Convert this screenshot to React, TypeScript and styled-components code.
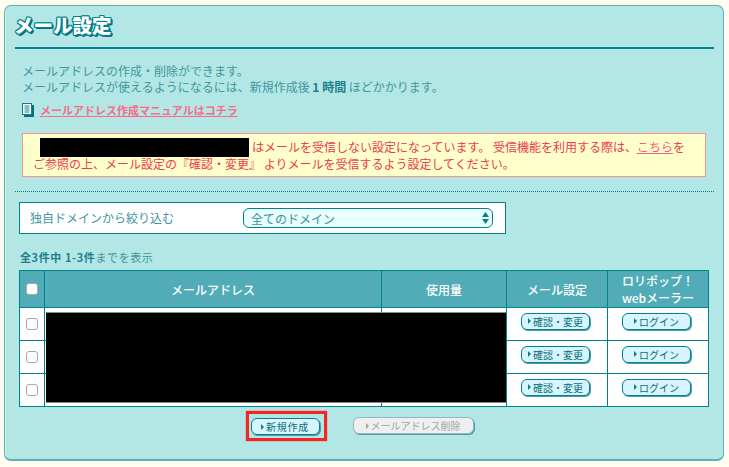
import React from "react";
import styled, { createGlobalStyle } from "styled-components";

const teal = "#00838f";
const FONT = `"Noto Sans CJK JP", "Liberation Sans", sans-serif`;

const GlobalStyle = createGlobalStyle`
  html, body {
    margin: 0;
    background: #fffdf0;
  }
  body {
    font-family: ${FONT};
    font-size: 12px;
    line-height: 16px;
    color: #44959f;
  }
`;

const Panel = styled.div`
  box-sizing: border-box;
  width: 720px;
  height: 456px;
  margin: 5px 0 0 4px;
  padding: 9px 9px 0 10px;
  background: #b2e7e5;
  border: 1px solid #55b1b4;
  border-bottom: 2px solid #58b0b0;
  border-radius: 7px;
  box-shadow: inset 1px 0 0 #d6f3f1;
`;

const Title = styled.h1`
  box-sizing: border-box;
  margin: 0;
  height: 34px;
  text-indent: -1px;
  border-bottom: 2px solid ${teal};
  font-size: 19.5px;
  line-height: 20px;
  font-weight: 900;
  color: #fff;
  text-shadow: -1px -1px 0 ${teal}, 1px -1px 0 ${teal}, -1px 1px 0 ${teal},
    1px 1px 0 ${teal}, 0 -1px 0 ${teal}, 0 1px 0 ${teal}, -1px 0 0 ${teal},
    1px 0 0 ${teal}, 2px 2px 0 #0b6f79, 2px 1px 0 #0b6f79, 1px 2px 0 #0b6f79;
`;

const Intro = styled.p`
  margin: 14px 0 0 7px;
`;

const Strong = styled.b`
  color: #1d7f8b;
`;

const ManualRow = styled.div`
  display: flex;
  align-items: center;
  gap: 6px;
  margin: 7px 0 0 7px;
  height: 16px;
`;

const ManualLink = styled.a`
  font-size: 11px;
  font-weight: 700;
  color: #fb6a87;
  text-decoration: underline;
`;

const Notice = styled.div`
  box-sizing: border-box;
  width: 684px;
  height: 44px;
  margin: 15px 0 0 7px;
  padding: 4px 10px 0;
  background: #ffffcc;
  border: 1px solid #ff9090;
  color: #ee3a4e;
  line-height: 17px;
`;

const NoticeLine = styled.div`
  height: 17px;
  white-space: nowrap;
`;

const NoticeLink = styled.a`
  color: #fb5a7a;
  text-decoration: underline;
`;

const InlineMask = styled.span`
  display: inline-block;
  width: 209px;
  height: 17px;
  margin: 0 3px 0 7px;
  vertical-align: -3px;
  background: #000;
  box-shadow: 0 1px 0 #000, 0 2px 0 #000;
`;

const Dotted = styled.div`
  margin-top: 14px;
  border-top: 1px dotted ${teal};
`;

const FilterBox = styled.div`
  box-sizing: border-box;
  display: flex;
  align-items: center;
  width: 487px;
  height: 32px;
  margin: 10px 0 0 4px;
  padding: 0 12px 0 10px;
  background: #fff;
  border: 1px solid ${teal};
`;

const FilterLabel = styled.span`
  width: 213px;
`;

const SelectWrap = styled.div`
  position: relative;
  flex: 1;
`;

const Select = styled.select`
  box-sizing: border-box;
  display: block;
  width: 100%;
  height: 20px;
  padding: 0 0 0 7px;
  appearance: none;
  background: #e9fffe;
  border: 1px solid ${teal};
  border-radius: 6px;
  font-family: ${FONT};
  font-size: 12px;
  color: #35939c;
  outline: none;
`;

const SelectArrows = styled.svg`
  position: absolute;
  top: 4px;
  right: 4px;
  pointer-events: none;
`;

const Count = styled.p`
  margin: 15px 0 0 5px;
  font-size: 11px;
  line-height: 16px;
  letter-spacing: 0.6px;
`;

const TableWrap = styled.div`
  position: relative;
  width: 690px;
  margin: 5px 0 0 4px;
`;

const Table = styled.table`
  width: 690px;
  border-collapse: collapse;
  table-layout: fixed;
  background: #fff;
  border: 1px solid ${teal};
`;

const Th = styled.th<{ $w?: number }>`
  width: ${(p) => (p.$w ? `${p.$w}px` : "auto")};
  height: 36px;
  padding: 0;
  background: #52acb8;
  border: 1px solid ${teal};
  font-size: 12px;
  line-height: 17px;
  font-weight: 500;
  color: #fff;
`;

const Td = styled.td`
  height: 32px;
  padding: 0;
  text-align: center;
  border: 1px solid ${teal};
`;

const CheckBox = styled.input.attrs({ type: "checkbox" })`
  display: block;
  box-sizing: border-box;
  width: 12px;
  height: 12px;
  margin: 0 auto;
  appearance: none;
  background: #fff;
  border: 1px solid #a8a8a8;
  border-radius: 3px;
`;

const Redaction = styled.div`
  position: absolute;
  left: 27px;
  top: 42px;
  width: 460px;
  height: 91px;
  background: #000;
  border-top: 1px solid #8a8a8a;
  border-bottom: 1px solid #8a8a8a;
  box-sizing: border-box;
`;

const Button = styled.button<{ $w: number; $off?: boolean; $spacing: number }>`
  display: inline-flex;
  align-items: center;
  justify-content: center;
  gap: 2px;
  box-sizing: border-box;
  width: ${(p) => p.$w}px;
  height: 17px;
  padding: 0;
  vertical-align: middle;
  background: ${(p) => (p.$off ? "#efefef" : "#d8f5ff")};
  border: 1px solid ${(p) => (p.$off ? "#8fb9bd" : teal)};
  border-radius: 6px;
  box-shadow: 1px 1px 0 #4e9aa3;
  font-family: ${FONT};
  font-size: 10px;
  line-height: 15px;
  letter-spacing: ${(p) => p.$spacing}px;
  color: ${(p) => (p.$off ? "#a3a3a3" : "#0b6f79")};
`;

const Caret = styled.span<{ $off?: boolean }>`
  width: 0;
  height: 0;
  border-left: 3px solid ${(p) => (p.$off ? "#a3a3a3" : teal)};
  border-top: 3px solid transparent;
  border-bottom: 3px solid transparent;
`;

const CellAction = styled.div`
  margin-bottom: 7px;
  padding-right: 3px;
`;

const Actions = styled.div`
  display: flex;
  justify-content: center;
  gap: 33px;
  width: 690px;
  margin: 10px 0 0 4px;
  padding-right: 4px;
  box-sizing: border-box;
`;

const Highlight = styled.div`
  position: relative;
  height: 17px;

  &::after {
    content: "";
    position: absolute;
    inset: -6px -7px -7px -5px;
    border: 3px solid #f5261f;
    box-shadow: 0 0 1px #f5261f;
    pointer-events: none;
  }
`;

const rows = [1, 2, 3];

const DocIcon = () => (
  <svg width="12" height="14" viewBox="0 0 12 14">
    <rect x="2" y="2" width="10" height="12" fill="#0b6f79" />
    <rect x="0.5" y="0.5" width="9" height="11" fill="#fff" stroke="#0b7f8b" />
    <path d="M2.5 3h5M2.5 5h5M2.5 7h5M2.5 9h5" stroke="#0b7f8b" />
  </svg>
);

const ActionButton = ({
  w,
  off,
  label,
  spacing = 0,
}: {
  w: number;
  off?: boolean;
  label: string;
  spacing?: number;
}) => (
  <Button $w={w} $off={off} $spacing={spacing} disabled={off}>
    <Caret $off={off} />
    {label}
  </Button>
);

const App = () => {
  return (
    <>
      <GlobalStyle />
      <Panel>
        <Title>メール設定</Title>
        <Intro>
          メールアドレスの作成・削除ができます。
          <br />
          メールアドレスが使えるようになるには、新規作成後 <Strong>1 時間</Strong> ほどかかります。
        </Intro>
        <ManualRow>
          <DocIcon />
          <ManualLink>メールアドレス作成マニュアルはコチラ</ManualLink>
        </ManualRow>
        <Notice>
          <NoticeLine>
            <InlineMask />
            はメールを受信しない設定になっています。 受信機能を利用する際は、
            <NoticeLink>こちら</NoticeLink>を
          </NoticeLine>
          <NoticeLine>
            ご参照の上、メール設定の『確認・変更』 よりメールを受信するよう設定してください。
          </NoticeLine>
        </Notice>
        <Dotted />
        <FilterBox>
          <FilterLabel>独自ドメインから絞り込む</FilterLabel>
          <SelectWrap>
            <Select defaultValue="all">
              <option value="all">全てのドメイン</option>
            </Select>
            <SelectArrows width="7" height="12" viewBox="0 0 7 12">
              <path d="M3.5 0L7 5H0zM3.5 12L0 7h7z" fill={teal} />
            </SelectArrows>
          </SelectWrap>
        </FilterBox>
        <Count>
          <Strong>全3件中 1-3件</Strong>までを表示
        </Count>
        <TableWrap>
          <Table>
            <thead>
              <tr>
                <Th $w={24}>
                  <CheckBox />
                </Th>
                <Th $w={336}>メールアドレス</Th>
                <Th $w={124}>使用量</Th>
                <Th $w={100}>メール設定</Th>
                <Th>
                  ロリポップ！
                  <br />
                  webメーラー
                </Th>
              </tr>
            </thead>
            <tbody>
              {rows.map((r) => (
                <tr key={r}>
                  <Td>
                    <CheckBox />
                  </Td>
                  <Td />
                  <Td />
                  <Td>
                    <CellAction>
                      <ActionButton w={69} label="確認・変更" />
                    </CellAction>
                  </Td>
                  <Td>
                    <CellAction>
                      <ActionButton w={69} label="ログイン" />
                    </CellAction>
                  </Td>
                </tr>
              ))}
            </tbody>
          </Table>
          <Redaction />
        </TableWrap>
        <Actions>
          <Highlight>
            <ActionButton w={69} label="新規作成" spacing={0.8} />
          </Highlight>
          <ActionButton w={121} off label="メールアドレス削除" />
        </Actions>
      </Panel>
    </>
  );
};

export default App;
